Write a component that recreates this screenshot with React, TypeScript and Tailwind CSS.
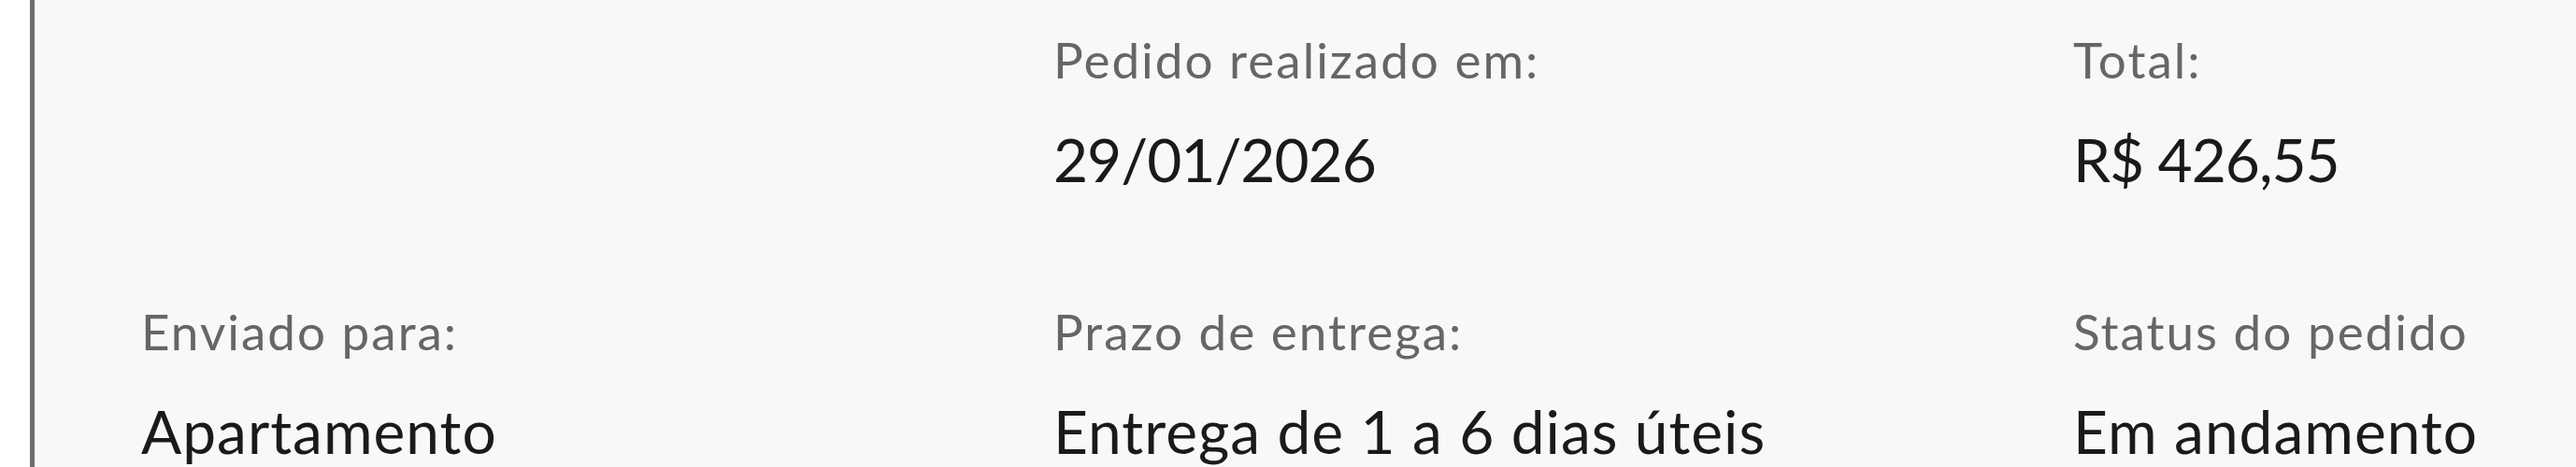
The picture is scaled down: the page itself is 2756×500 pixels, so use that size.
const rows = [
  [
    null,
    { label: "Pedido realizado em:", value: "29/01/2026", numeric: true },
    { label: "Total:", value: "R$ 426,55", numeric: true },
  ],
  [
    { label: "Enviado para:", value: "Apartamento" },
    { label: "Prazo de entrega:", value: "Entrega de 1 a 6 dias úteis" },
    { label: "Status do pedido", value: "Em andamento" },
  ],
];

function InfoItem({ label, value, numeric }: { label: string; value: string; numeric?: boolean }) {
  return (
    <div className="flex flex-col">
      <span className="text-[53px] leading-[1.2] tracking-[2px] text-[#666666]">{label}</span>
      <span
        className={
          numeric
            ? "mt-[37px] text-[64px] leading-[1.2] tracking-[-1px] text-[#1a1a1a]"
            : "mt-[37px] text-[64px] leading-[1.2] tracking-[1px] text-[#1a1a1a]"
        }
      >
        {value}
      </span>
    </div>
  );
}

export default function App() {
  return (
    <div className="h-[500px] w-[2756px] overflow-hidden bg-white pl-[32px] font-['Lato',sans-serif]">
      <div className="h-full border-l-[5px] border-[#6e6e6e] bg-[#f8f8f8] pl-[114px] pt-[32px]">
        <div className="grid grid-cols-[976px_1091px_1fr] gap-y-[114px]">
          {rows.flat().map((item, i) =>
            item ? (
              <InfoItem key={i} label={item.label} value={item.value} numeric={item.numeric} />
            ) : (
              <div key={i} />
            )
          )}
        </div>
      </div>
    </div>
  );
}
